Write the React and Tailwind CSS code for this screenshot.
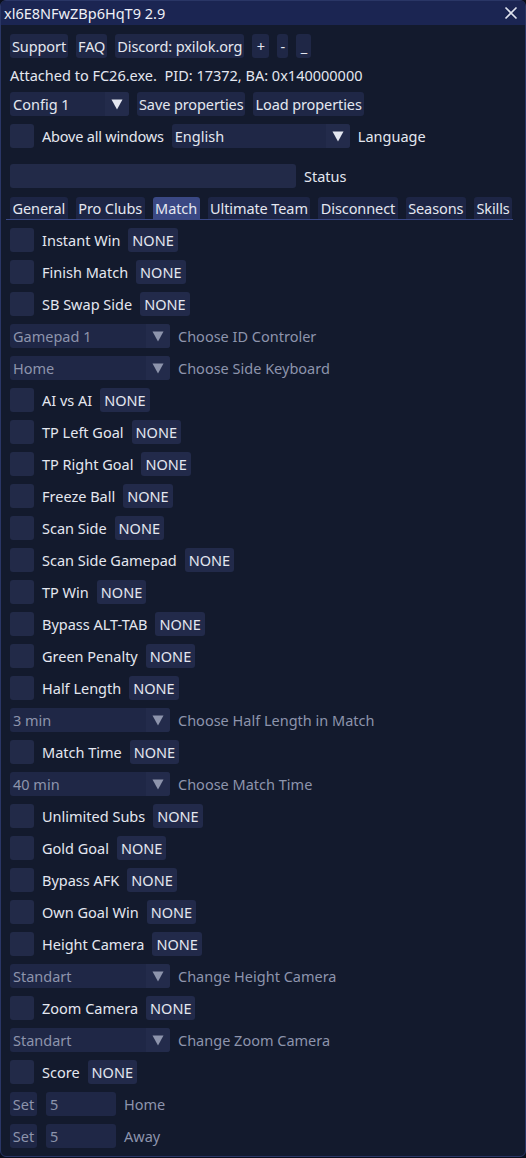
import React from "react";

const font = { fontFamily: '"Noto Sans", "Open Sans", sans-serif' };

function Btn({ children, dim, className = "" }) {
  return (
    <div className={`h-[24px] px-[2px] flex items-center rounded-[3px] bg-[#1f2746] whitespace-nowrap tracking-[-0.1px] ${dim ? "text-[#8d94ac]" : "text-[#e4e7f0]"} ${className}`}>
      {children}
    </div>
  );
}

function Check() {
  return <div className="w-[24px] h-[24px] rounded-[3px] bg-[#222a48] shrink-0" />;
}

function Arrow({ dim }) {
  return (
    <svg width="12" height="11" viewBox="0 0 12 11">
      <path d="M0.5 0.5 L11.5 0.5 L6 10.5 Z" fill={dim ? "#8d94ac" : "#e4e7f0"} />
    </svg>
  );
}

function Combo({ value, width, dim, label, labelDim }) {
  return (
    <div className="flex items-center h-[24px]">
      <div className="flex h-[24px] rounded-[3px] bg-[#1f2746] shrink-0" style={{ width }}>
        <div className={`flex-1 flex items-center pl-[3px] whitespace-nowrap ${dim ? "text-[#8d94ac]" : "text-[#e4e7f0]"}`}>{value}</div>
        <div className="w-[24px] flex items-center justify-center rounded-r-[3px] bg-[#232b4b]">
          <Arrow dim={dim} />
        </div>
      </div>
      {label && <span className={`ml-[8px] whitespace-nowrap ${labelDim ? "text-[#8d94ac]" : "text-[#e4e7f0]"}`}>{label}</span>}
    </div>
  );
}

function CheckRow({ label }) {
  return (
    <div className="flex items-center h-[24px]">
      <Check />
      <span className="ml-[8px] text-[#e4e7f0] whitespace-nowrap">{label}</span>
      <div className="ml-[8px] h-[24px] px-[4px] flex items-center rounded-[3px] bg-[#222a4a] text-[#e4e7f0]">NONE</div>
    </div>
  );
}

function SetRow({ label }) {
  return (
    <div className="flex items-center h-[24px]">
      <div className="h-[24px] w-[27px] flex items-center justify-center rounded-[3px] bg-[#1f2746] text-[#8d94ac]">Set</div>
      <div className="ml-[9px] h-[24px] w-[70px] flex items-center pl-[4px] rounded-[3px] bg-[#1f2746] text-[#8d94ac]">5</div>
      <span className="ml-[8px] text-[#8d94ac]">{label}</span>
    </div>
  );
}

const tabs = ["General", "Pro Clubs", "Match", "Ultimate Team", "Disconnect", "Seasons", "Skills"];

export default function App() {
  return (
    <div className="w-[526px] h-[1158px] bg-[#0b0f1c] text-[14.5px] leading-[18px]" style={font}>
      <div className="w-[526px] h-[1157px] flex flex-col rounded-[6px] border border-[#2a3666] bg-[#131a2d] overflow-hidden">
        <div className="h-[24px] shrink-0 bg-[#1b2552] flex items-center justify-between pl-[3px] pr-[7px]">
          <span className="text-[#eef0f7] whitespace-nowrap">xl6E8NFwZBp6HqT9 2.9</span>
          <svg width="14" height="14" viewBox="0 0 14 14">
            <path d="M1.5 1.5 L12.5 12.5 M12.5 1.5 L1.5 12.5" stroke="#dfe3ee" strokeWidth="1.6" />
          </svg>
        </div>
        <div className="flex flex-col pl-[9px] pt-[9px]">
          <div className="flex items-center gap-[8px]">
            <Btn>Support</Btn>
            <Btn>FAQ</Btn>
            <Btn>Discord: pxilok.org</Btn>
            <Btn className="w-[17px] justify-center">+</Btn>
            <Btn className="w-[11px] justify-center">-</Btn>
            <Btn className="w-[15px] justify-center">_</Btn>
          </div>
          <div className="h-[24px] mt-[5px] flex items-center text-[#e4e7f0] whitespace-pre">Attached to FC26.exe.  PID: 17372, BA: 0x140000000</div>
          <div className="flex items-center gap-[8px] mt-[5px]">
            <Combo value="Config 1" width={119} />
            <Btn>Save properties</Btn>
            <Btn>Load properties</Btn>
          </div>
          <div className="flex items-center mt-[8px]">
            <Check />
            <span className="ml-[8px] text-[#e4e7f0] whitespace-nowrap tracking-[-0.2px]">Above all windows</span>
            <div className="ml-[8px]">
              <Combo value="English" width={178} label="Language" />
            </div>
          </div>
          <div className="flex items-center mt-[16px]">
            <div className="w-[286px] h-[24px] rounded-[3px] bg-[#222a48]" />
            <span className="ml-[8px] text-[#e4e7f0]">Status</span>
          </div>
          <div className="mt-[9px] ml-[-4px] w-[507px] flex flex-col">
            <div className="flex items-end gap-[8px] pl-[4px]">
              {tabs.map((t) => (
                <div key={t} className={`h-[22px] px-[2.5px] flex items-center rounded-t-[3px] whitespace-nowrap tracking-[-0.1px] text-[#e4e7f0] ${t === "Match" ? "bg-[#3a4884]" : "bg-[#1d2545]"}`}>{t}</div>
              ))}
            </div>
            <div className="h-[1px] bg-[#3a4884]" />
          </div>
          <div className="flex flex-col gap-[8px] mt-[8px]">
            <CheckRow label="Instant Win" />
            <CheckRow label="Finish Match" />
            <CheckRow label="SB Swap Side" />
            <Combo value="Gamepad 1" width={160} dim label="Choose ID Controler" labelDim />
            <Combo value="Home" width={160} dim label="Choose Side Keyboard" labelDim />
            <CheckRow label="AI vs AI" />
            <CheckRow label="TP Left Goal" />
            <CheckRow label="TP Right Goal" />
            <CheckRow label="Freeze Ball" />
            <CheckRow label="Scan Side" />
            <CheckRow label="Scan Side Gamepad" />
            <CheckRow label="TP Win" />
            <CheckRow label="Bypass ALT-TAB" />
            <CheckRow label="Green Penalty" />
            <CheckRow label="Half Length" />
            <Combo value="3 min" width={160} dim label="Choose Half Length in Match" labelDim />
            <CheckRow label="Match Time" />
            <Combo value="40 min" width={160} dim label="Choose Match Time" labelDim />
            <CheckRow label="Unlimited Subs" />
            <CheckRow label="Gold Goal" />
            <CheckRow label="Bypass AFK" />
            <CheckRow label="Own Goal Win" />
            <CheckRow label="Height Camera" />
            <Combo value="Standart" width={160} dim label="Change Height Camera" labelDim />
            <CheckRow label="Zoom Camera" />
            <Combo value="Standart" width={160} dim label="Change Zoom Camera" labelDim />
            <CheckRow label="Score" />
            <SetRow label="Home" />
            <SetRow label="Away" />
          </div>
        </div>
      </div>
    </div>
  );
}
